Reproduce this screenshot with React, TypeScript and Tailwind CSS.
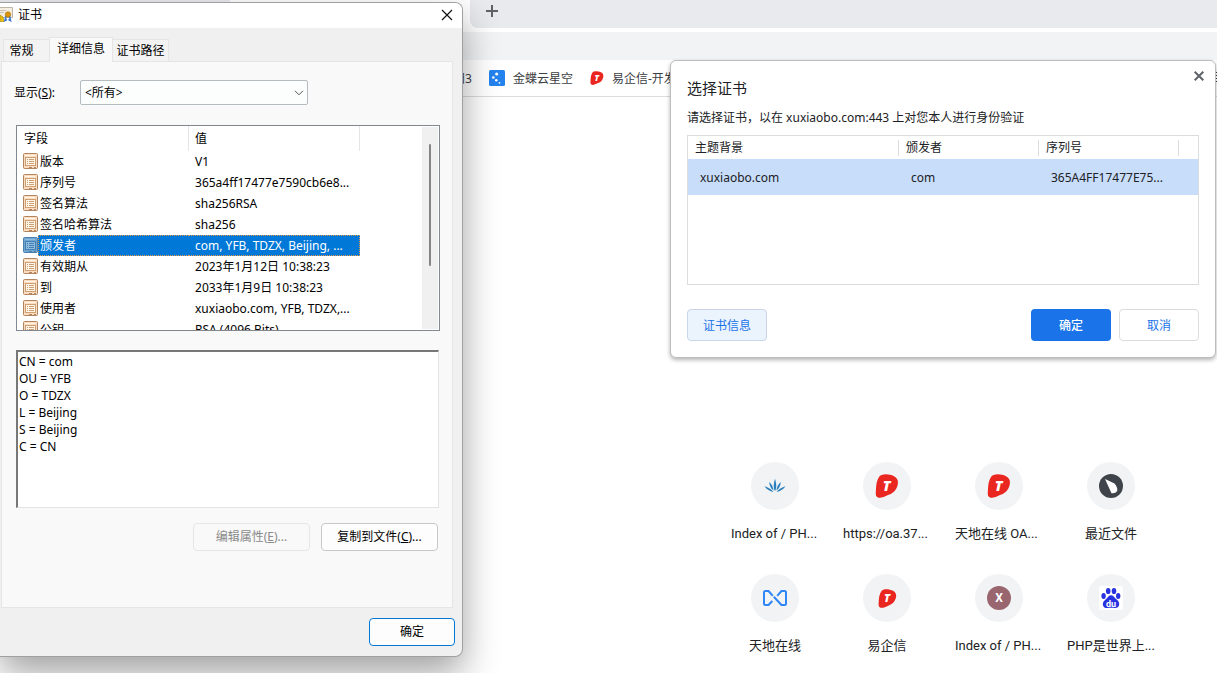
import React from 'react';

type Field = { name: string; value: string };

const FIELDS: Field[] = [
  { name: '版本', value: 'V1' },
  { name: '序列号', value: '365a4ff17477e7590cb6e8...' },
  { name: '签名算法', value: 'sha256RSA' },
  { name: '签名哈希算法', value: 'sha256' },
  { name: '颁发者', value: 'com, YFB, TDZX, Beijing, ...' },
  { name: '有效期从', value: '2023年1月12日 10:38:23' },
  { name: '到', value: '2033年1月9日 10:38:23' },
  { name: '使用者', value: 'xuxiaobo.com, YFB, TDZX,...' },
  { name: '公钥', value: 'RSA (4096 Bits)' },
];

const DETAILS = ['CN = com', 'OU = YFB', 'O = TDZX', 'L = Beijing', 'S = Beijing', 'C = CN'].join('\n');

function FieldIcon({ selected }: { selected: boolean }) {
  const edge = selected ? '#4c7fae' : '#b18560';
  const line = selected ? '#4580b4' : '#cf9f74';
  const fill = selected ? '#6ea6d2' : '#fddcbf';
  const paper = selected ? '#8fbbdf' : '#fff6ea';
  return (
    <svg width="15" height="16" viewBox="0 0 15 16" className="block" aria-hidden="true">
      <rect x="0.5" y="0.5" width="14" height="15" rx="1" fill={fill} stroke={edge} />
      <path d="M2 2.5h10" stroke={paper} />
      <rect x="2.5" y="4.5" width="10" height="8" fill={paper} stroke={line} />
      <path d="M4 6.5h1M6 6.5h5M4 8.5h1M6 8.5h5M4 10.5h1M6 10.5h5" stroke={line} />
      <path d="M6 14.5h3M11 14.5h2" stroke={edge} />
    </svg>
  );
}

function CertIcon() {
  return (
    <svg width="13" height="15" viewBox="0 0 13 15" className="block" aria-hidden="true">
      <path d="M0 .5h12.5v10H0" fill="#f4eee0" stroke="#bdb6a6" />
      <path d="M0 3.5h6M0 5.5h4" stroke="#c9c2b2" />
      <path d="M6 9l-1 4.5 2-1M9.5 9l1 4.5-2-1" fill="none" stroke="#3b78d8" strokeWidth="1.6" />
      <circle cx="8" cy="7.5" r="2.7" fill="#d9960c" stroke="#a96c05" strokeWidth="0.6" />
      <path d="M0 8l3 2 1 4.5H0z" fill="#e6bd10" stroke="#a88508" strokeWidth="0.6" />
    </svg>
  );
}

function RedLogo({ size }: { size: number }) {
  return (
    <svg width={size} height={size} viewBox="0 0 24 24" className="block" aria-hidden="true">
      <path
        d="M4 3C6-.5 14-.3 19 2.300c4 2.300 4.500 5.200 3.500 9.200-1.500 5.500-5 8-9.500 9.500-3.500 1.500-7 3.500-10 2.600C0 22.600.8 19 1 15 1.200 10 2 6 4 3z"
        fill="#ea2620"
      />
      <text x="11.500" y="17" fontSize="14" fontWeight="900" fontStyle="italic" textAnchor="middle" fill="#fff" fontFamily="Open Sans, sans-serif">
        T
      </text>
    </svg>
  );
}

function LotusLogo() {
  return (
    <svg width="24" height="24" viewBox="0 0 24 24" className="block" aria-hidden="true">
      <g fill="#2b7fbd">
        <path d="M12 17c-1.700-3-1.700-6.500 0-12.300 1.700 5.800 1.700 9.300 0 12.300z" />
        <path d="M10.600 16.500C8 14.500 6.500 12 6.200 8c2.600 2.400 3.900 5 4.400 8.500zM13.400 16.500c2.600-2 4.100-4.500 4.400-8.500-2.600 2.400-3.900 5-4.400 8.500z" />
        <path d="M10.500 18c-3.800-.5-6.700-2.500-9-5.700 3.800 1.200 6.700 3 9 5.700zM13.500 18c3.800-.5 6.700-2.500 9-5.700-3.800 1.200-6.700 3-9 5.700z" />
      </g>
    </svg>
  );
}

function RibbonLogo() {
  return (
    <svg width="24" height="18" viewBox="0 0 24 18" fill="none" stroke="#2f86f6" strokeWidth="2" strokeLinejoin="round" className="block" aria-hidden="true">
      <path d="M9.8 6.8L5.500 2H2.500Q1 2 1 3.500v11Q1 16 2.500 16h3l3.800-4" />
      <path d="M14.2 6.8L18.500 2h3Q23 2 23 3.500v11q0 1.500-1.500 1.500h-3L10.800 7.800" />
    </svg>
  );
}

function BladeLogo() {
  return (
    <svg width="24" height="24" viewBox="0 0 24 24" className="block" aria-hidden="true">
      <circle cx="12" cy="12" r="12" fill="#3f444a" />
      <path d="M6 5l9.500 4.500q3.500 4 2.700 7.500-1.800 2.800-5.700 2.200z" fill="#fff" />
    </svg>
  );
}

function PawLogo() {
  return (
    <svg width="24" height="24" viewBox="0 0 24 24" className="block" aria-hidden="true">
      <rect width="24" height="24" rx="2" fill="#fff" />
      <g fill="#2932e1">
        <ellipse cx="9.2" cy="5" rx="2.3" ry="3.1" />
        <ellipse cx="15" cy="5" rx="2.3" ry="3.1" />
        <ellipse cx="4.6" cy="10" rx="2.2" ry="2.9" />
        <ellipse cx="19.2" cy="10" rx="2.2" ry="2.9" />
        <path d="M12 9.300c2.300 0 3.200 2 4.500 3.300 1.800 1.600 4 3 3.700 5.900-.3 2.600-2.300 3.700-4.600 3.500-1.500-.2-5.200-.2-7 0-2.500.2-4.600-.9-4.800-3.600-.2-2.700 2.200-4.300 3.800-5.800C8.900 11.300 9.700 9.300 12 9.300z" />
      </g>
      <text x="12" y="20.500" fontSize="9" fontWeight="700" textAnchor="middle" fill="#fff" fontFamily="Roboto, sans-serif">
        du
      </text>
    </svg>
  );
}

function KingdeeLogo() {
  return (
    <svg width="16" height="16" viewBox="0 0 16 16" className="block" aria-hidden="true">
      <rect width="16" height="16" rx="1.5" fill="#2483ee" />
      <g fill="#fff">
        <circle cx="7.7" cy="4" r="1.6" />
        <circle cx="4.3" cy="7.5" r="1.3" />
        <circle cx="7.3" cy="10.3" r="1.3" />
        <circle cx="10.5" cy="12.8" r="0.9" />
      </g>
    </svg>
  );
}

// cut: длинный заголовок, прижат к левому краю
const SHORTCUTS = [
  { title: 'Index of / PH...', cut: true, icon: <LotusLogo /> },
  { title: 'https://oa.37...', cut: true, icon: <RedLogo size={24} /> },
  { title: '天地在线 OA...', cut: true, icon: <RedLogo size={24} /> },
  { title: '最近文件', cut: false, icon: <BladeLogo /> },
  { title: '天地在线', cut: false, icon: <RibbonLogo /> },
  { title: '易企信', cut: false, icon: <RedLogo size={19} /> },
  {
    title: 'Index of / PH...',
    cut: true,
    icon: (
      <span className="flex size-6 items-center justify-center rounded-full bg-[#99656e] text-xs font-bold text-white">
        X
      </span>
    ),
  },
  { title: 'PHP是世界上...', cut: true, icon: <PawLogo /> },
];

function Browser() {
  return (
    <div className="flex flex-col">
      <div className="flex h-7">
        <div className="w-[230px] bg-[#e8eaed]" />
        <div className="w-[240px] bg-white" />
        <div className="flex flex-1 items-start rounded-bl-lg bg-[#e8eaed] pt-1 pl-[15px]">
          <button type="button" aria-label="新标签页" className="block">
            <svg width="14" height="14" viewBox="0 0 14 14" stroke="#5f6368" strokeWidth="2" className="block">
              <path d="M7 1v12M1 7h12" />
            </svg>
          </button>
        </div>
      </div>
      <div className="mt-1 h-7 bg-[#f1f3f4]" />
      <nav className="flex h-[37px] items-center overflow-hidden border-b border-[#dadce0] bg-white pl-[453px] whitespace-nowrap text-[#3c4043]">
        <a href="#" className="pt-px">
          阳3
        </a>
        <a href="#" className="ml-[17px] flex items-center gap-2">
          <KingdeeLogo />
          <span className="pt-px">金蝶云星空</span>
        </a>
        <a href="#" className="ml-[17px] flex items-center gap-2">
          <RedLogo size={14} />
          <span className="pt-px">易企信-开发</span>
        </a>
        <svg width="2" height="12" viewBox="0 0 2 12" stroke="#3c4043" className="ml-auto block" aria-hidden="true">
          <path d="M0 .5h2M0 3.5h2M0 6.5h2M0 9.5h2" />
        </svg>
      </nav>
      <main className="flex justify-end pt-[365px] pr-[50px] font-[Roboto,'Noto_Sans_CJK_SC',sans-serif]">
        <div className="grid grid-cols-4">
          {SHORTCUTS.map((s, i) => (
            <a key={i} href="#" className="flex h-28 w-28 flex-col items-center gap-3 text-[13px] leading-6 text-[#202124]">
              <span className="flex size-12 items-center justify-center rounded-full bg-[#f1f3f4]">{s.icon}</span>
              <span className={s.cut ? 'w-[88px] whitespace-nowrap' : 'w-[88px] text-center whitespace-nowrap'}>
                {s.title}
              </span>
            </a>
          ))}
        </div>
      </main>
    </div>
  );
}

function CertificateWindow() {
  const [selected, setSelected] = React.useState(4);

  return (
    <section
      aria-label="证书"
      className="absolute top-[2px] left-0 w-[463px] overflow-hidden rounded-r-lg border border-l-0 border-[#a0a0a0] bg-[#f0f0f0] text-black shadow-[0_16px_36px_rgba(0,0,0,0.37)]"
    >
      <header className="flex h-[25px] items-center bg-white pr-[9px] pb-[2px]">
        <CertIcon />
        <h1 className="flex-1 pl-[5px]">证书</h1>
        <button type="button" aria-label="关闭">
          <svg width="12" height="12" viewBox="0 0 12 12" stroke="#111" strokeWidth="1.2" className="block">
            <path d="M1 1l10 10M11 1L1 11" />
          </svg>
        </button>
      </header>

      <div className="pr-[9px] pl-px">
        <div role="tablist" className="flex h-[33px] items-end pl-[2px]">
          <button type="button" role="tab" aria-selected={false} className="h-[22px] w-[46px] border border-r-0 border-b-0 border-[#e5e5e5] bg-[#f3f3f3] pr-[10px]">
            常规
          </button>
          <button type="button" role="tab" aria-selected={true} className="relative -mb-px h-[25px] w-16 border border-b-0 border-[#e5e5e5] bg-[#f9f9f9] pb-[2px]">
            详细信息
          </button>
          <button type="button" role="tab" aria-selected={false} className="h-[22px] w-14 border border-b-0 border-l-0 border-[#e5e5e5] bg-[#f3f3f3]">
            证书路径
          </button>
        </div>

        <div role="tabpanel" className="border border-[#e5e5e5] bg-[#f9f9f9] pt-[18px] pr-3 pb-14 pl-[14px]">
          <div className="flex items-center">
            <label htmlFor="show" className="-ml-[2px] w-[66px] pt-px">
              显示(<u>S</u>):
            </label>
            <div className="relative">
              <select id="show" className="block h-[25px] w-[228px] appearance-none rounded-[2px] border border-[#b4bcbf] bg-[#fcfdfd] pt-px pl-1">
                <option>{'<所有>'}</option>
              </select>
              <svg width="10" height="6" viewBox="0 0 10 6" fill="none" stroke="#555" className="pointer-events-none absolute top-[10px] right-1">
                <path d="M1 .8l4 4 4-4" />
              </svg>
            </div>
          </div>

          {/* Список полей сертификата */}
          <div className="mt-5 flex h-[206px] overflow-hidden border border-[#828790] bg-white">
            <div className="flex-1">
              <table className="w-[343px] table-fixed border-separate border-spacing-0 text-left whitespace-nowrap">
                <colgroup>
                  <col className="w-[21px]" />
                  <col className="w-[151px]" />
                  <col className="w-[171px]" />
                </colgroup>
                <thead>
                  <tr className="h-[25px]">
                    <th colSpan={2} className="border-r border-[#e5e5e5] p-0 pl-[7px] font-normal">
                      字段
                    </th>
                    <th className="border-r border-[#e5e5e5] p-0 pl-[6px] font-normal">值</th>
                  </tr>
                </thead>
                <tbody>
                  {FIELDS.map((f, i) => {
                    const on = i === selected;
                    const cell = on
                      ? 'h-[21px] border-y border-dotted border-[#e59a4c] bg-[#0078d7] p-0 leading-[18px] text-white'
                      : 'h-[21px] border-y border-transparent p-0 leading-[18px]';
                    return (
                      <tr key={f.name} onClick={() => setSelected(i)}>
                        <td className="h-[21px] p-0 pt-[2px] pl-[6px] align-top">
                          <FieldIcon selected={on} />
                        </td>
                        <td className={`${cell} border-l pl-px`}>{f.name}</td>
                        <td className={`${cell} border-r pl-[6px]`}>{f.value}</td>
                      </tr>
                    );
                  })}
                </tbody>
              </table>
            </div>
            <div className="my-px mr-px flex w-4 justify-center bg-[#f0f0f0] pt-[17px]">
              <div className="h-[122px] w-[2px] rounded-full bg-[#858585]" />
            </div>
          </div>

          <div className="mt-[19px] pr-px">
            <textarea
              readOnly
              aria-label="字段值"
              value={DETAILS}
              className="block h-[158px] w-full resize-none border border-t-2 border-l-2 border-[#e3e3e3] border-t-[#777] border-l-[#777] bg-white px-px pt-px leading-[17px] outline-none"
            />
          </div>

          <div className="mt-[15px] flex justify-end gap-[11px] pr-[2px]">
            <button type="button" disabled className="h-7 w-[117px] rounded border border-[#e6e6e6] bg-[#f9f9f9] text-[#8a8a8a]">
              编辑属性(<u>E</u>)...
            </button>
            <button type="button" className="h-7 w-[117px] rounded border border-[#c8c8c8] bg-[#fdfdfd]">
              复制到文件(<u>C</u>)...
            </button>
          </div>
        </div>
      </div>

      <footer className="flex justify-end pt-[10px] pr-[7px] pb-[10px]">
        <button type="button" className="h-7 w-[86px] rounded border border-[#0078d4] bg-[#fdfdfd]">
          确定
        </button>
      </footer>
    </section>
  );
}

function SelectCertificateDialog() {
  return (
    <section
      role="dialog"
      aria-label="选择证书"
      className="absolute top-[60px] right-px w-[546px] rounded-md border border-[#bdbdbd] bg-white px-4 pb-4 text-[#202124] shadow-[0_2px_4px_rgba(0,0,0,0.3)]"
    >
      <button type="button" aria-label="关闭" className="absolute top-[10px] right-[11px]">
        <svg width="10" height="10" viewBox="0 0 10 10" stroke="#5f6368" strokeWidth="2" className="block">
          <path d="M.7 .7l8.6 8.6M9.3 .7L.7 9.3" />
        </svg>
      </button>
      <h2 className="pt-[15px] text-[15px] leading-6">选择证书</h2>
      <p className="mt-2 leading-5">请选择证书，以在 xuxiaobo.com:443 上对您本人进行身份验证</p>

      <div className="mt-[7px] h-[150px] border border-[#dadce0]">
        <table className="w-full table-fixed border-separate border-spacing-0 text-left">
          <colgroup>
            <col className="w-[211px]" />
            <col className="w-[140px]" />
            <col className="w-[140px]" />
            <col />
          </colgroup>
          <thead>
            <tr className="h-[23px]">
              {['主题背景', '颁发者', '序列号'].map((t) => (
                <th key={t} className="p-0 pt-px font-normal">
                  <div className="border-r border-[#dadce0] pl-[7px] leading-4">{t}</div>
                </th>
              ))}
              <th className="p-0" />
            </tr>
          </thead>
          <tbody>
            <tr className="h-9 bg-[#c8ddfa]">
              <td className="p-0 pt-[2px] pl-3">xuxiaobo.com</td>
              <td className="p-0 pt-[2px] pl-3">com</td>
              <td className="p-0 pt-[2px] pl-3">365A4FF17477E75...</td>
              <td className="p-0" />
            </tr>
          </tbody>
        </table>
      </div>

      <div className="mt-6 flex gap-2 text-[#1a73e8]">
        <button type="button" className="mr-auto h-8 w-20 rounded border border-[#c9d6e8] bg-[#ebf3fd] pt-[2px]">
          证书信息
        </button>
        <button type="button" className="h-8 w-20 rounded bg-[#1a73e8] pt-[2px] font-medium text-white">
          确定
        </button>
        <button type="button" className="h-8 w-20 rounded border border-[#dadce0] bg-white pt-[2px]">
          取消
        </button>
      </div>
    </section>
  );
}

export default function App() {
  return (
    <div className="relative min-h-screen overflow-hidden bg-white font-['Noto_Sans','Noto_Sans_CJK_SC',sans-serif] text-xs">
      <Browser />
      <SelectCertificateDialog />
      <CertificateWindow />
    </div>
  );
}
